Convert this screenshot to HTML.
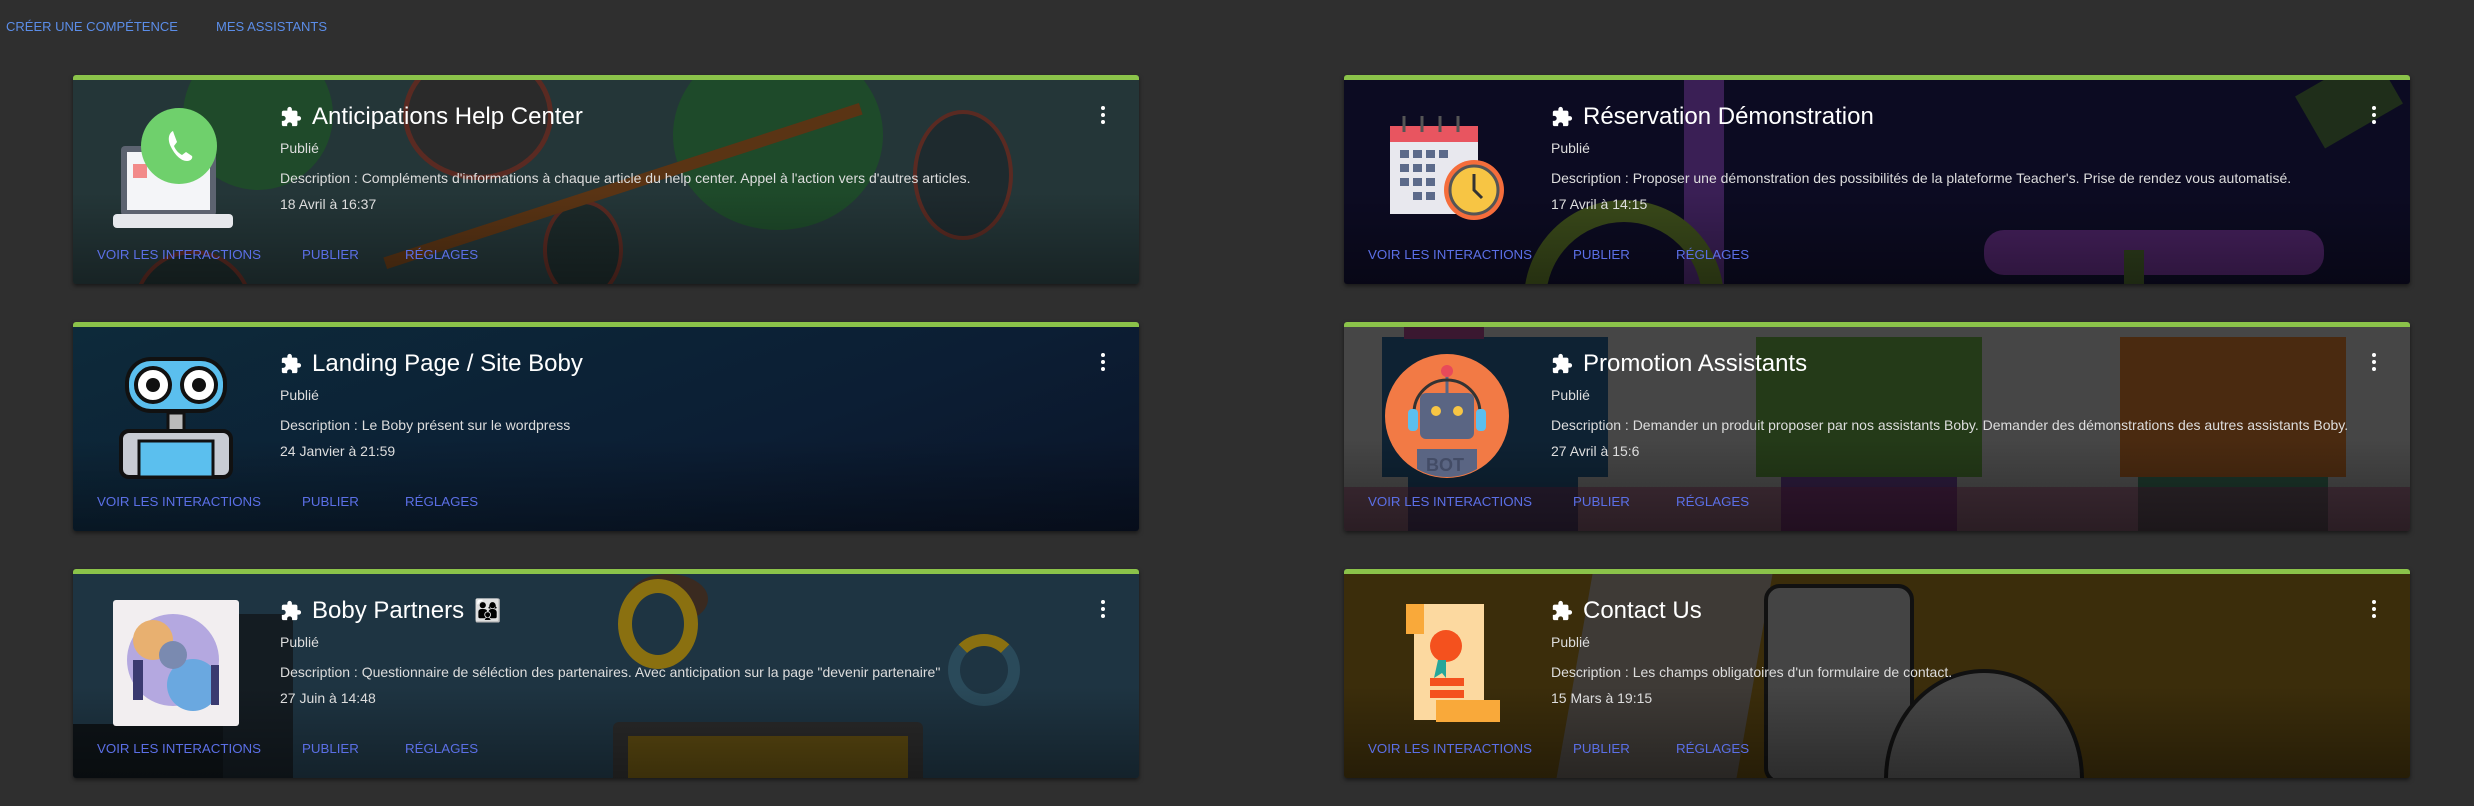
<!DOCTYPE html>
<html style="overflow:hidden"><head><meta charset="utf-8"><style>
*{margin:0;padding:0;box-sizing:border-box}
html,body{width:2474px;height:806px;overflow:hidden}
body{background:#2f2f2f;font-family:"Liberation Sans Narrow","Liberation Sans",sans-serif;position:relative}
.nav{position:absolute;top:19px;font-size:13px;color:#5b8de8;letter-spacing:0}
.card{position:absolute;width:1066px;height:209px;border-top:5px solid #8bc34a;border-radius:3px;overflow:hidden;box-shadow:0 2px 4px rgba(0,0,0,.5)}
.bg{position:absolute;inset:0}
.shade{position:absolute;inset:0;background:linear-gradient(180deg,rgba(0,0,0,0) 55%,rgba(0,0,0,.35) 100%)}
.ico{position:absolute;left:40px;top:26px;width:126px;height:126px}
.title{position:absolute;left:207px;top:23px;font-size:24px;color:#fff;display:flex;align-items:center;gap:10px;white-space:nowrap}
.title svg{width:22px;height:22px}
.t{position:absolute;left:207px;font-size:14px;color:#ddd;white-space:nowrap}
.acts{position:absolute;top:167px;left:24px;font-size:13.3px;color:#5b6fe6}
.acts span{position:absolute;white-space:nowrap}
.kb{position:absolute;right:34px;top:26px;width:4px}
.kb i{display:block;width:4px;height:4px;border-radius:50%;background:#fff;margin-bottom:3px}
</style></head><body>
<div class="nav" style="left:6px">CRÉER UNE COMPÉTENCE</div>
<div class="nav" style="left:216px">MES ASSISTANTS</div>

<!-- Card 1 -->
<div class="card" style="left:73px;top:75px">
<div class="bg" style="background:#243638">
<div style="position:absolute;left:110px;top:-40px;width:150px;height:150px;border-radius:50%;background:#1f4a2a"></div>
<div style="position:absolute;left:330px;top:-30px;width:150px;height:130px;border-radius:50%;background:#2a2a2a;border:5px solid #5a2a22"></div>
<div style="position:absolute;left:600px;top:-40px;width:210px;height:190px;border-radius:50%;background:#1e4a2a"></div>
<div style="position:absolute;left:840px;top:30px;width:100px;height:130px;border-radius:50%;background:#1e2a2e;border:4px solid #5a2a22"></div>
<div style="position:absolute;left:60px;top:170px;width:120px;height:120px;border-radius:50%;background:#1c2a2a;border:4px solid #5a2a22"></div>
<div style="position:absolute;left:470px;top:120px;width:80px;height:100px;border-radius:50%;background:#1c2a2a;border:4px solid #5a2a22"></div>
<div style="position:absolute;left:300px;top:100px;width:500px;height:12px;background:#5a3414;transform:rotate(-18deg)"></div>
</div><div class="shade"></div>
<svg class="ico" viewBox="0 0 126 126"><rect x="8" y="40" width="95" height="70" rx="4" fill="#5c6370"/><rect x="14" y="46" width="83" height="58" fill="#f4f5f8"/><rect x="20" y="58" width="14" height="14" fill="#f28a8a"/><rect x="0" y="108" width="120" height="14" rx="4" fill="#e6e8ec"/><circle cx="66" cy="40" r="38" fill="#6fd06c"/><path d="M60 25c-4 2-6 8-2 16s10 14 16 14c4 0 6-3 5-5l-6-4-4 3c-4-2-7-6-8-9l3-4-3-8z" fill="#fff"/></svg>
<div class="title"><svg viewBox="0 0 24 24"><path fill="#fff" d="M20.5 11H19V7a2 2 0 0 0-2-2h-4V3.5a2.5 2.5 0 0 0-5 0V5H4a2 2 0 0 0-2 2v3.8h1.5a2.7 2.7 0 0 1 0 5.4H2V20a2 2 0 0 0 2 2h3.8v-1.5a2.7 2.7 0 0 1 5.4 0V22H17a2 2 0 0 0 2-2v-4h1.5a2.5 2.5 0 0 0 0-5z"/></svg>Anticipations Help Center</div>
<div class="t" style="top:60px">Publié</div>
<div class="t" style="top:90px">Description : Compléments d'informations à chaque article du help center. Appel à l'action vers d'autres articles.</div>
<div class="t" style="top:116px">18 Avril à 16:37</div>
<div class="acts"><span style="left:0">VOIR LES INTERACTIONS</span><span style="left:205px">PUBLIER</span><span style="left:308px">RÉGLAGES</span></div>
<div class="kb"><i></i><i></i><i></i></div>
</div>

<!-- Card 2 -->
<div class="card" style="left:1344px;top:75px">
<div class="bg" style="background:#0c0b22">
<div style="position:absolute;left:340px;top:0;width:40px;height:209px;background:#3a1f55"></div>
<div style="position:absolute;left:640px;top:150px;width:340px;height:45px;border-radius:20px;background:#45205c"></div>
<div style="position:absolute;left:180px;width:200px;height:200px;border-radius:50%;border:22px solid #3a4a1a;top:120px"></div>
<div style="position:absolute;left:780px;top:170px;width:20px;height:60px;background:#2e3e1c"></div>
<div style="position:absolute;left:960px;top:-10px;width:90px;height:60px;background:#1f2e1a;transform:rotate(-30deg)"></div>
</div><div class="shade"></div>
<svg class="ico" viewBox="0 0 126 126"><rect x="6" y="20" width="88" height="88" fill="#e8e8ee"/><rect x="6" y="20" width="88" height="16" fill="#e85560"/><g fill="#5c6a8a"><rect x="16" y="44" width="9" height="8"/><rect x="29" y="44" width="9" height="8"/><rect x="42" y="44" width="9" height="8"/><rect x="55" y="44" width="9" height="8"/><rect x="16" y="58" width="9" height="8"/><rect x="29" y="58" width="9" height="8"/><rect x="42" y="58" width="9" height="8"/><rect x="16" y="72" width="9" height="8"/><rect x="29" y="72" width="9" height="8"/><rect x="42" y="72" width="9" height="8"/><rect x="29" y="86" width="9" height="8"/><rect x="42" y="86" width="9" height="8"/></g><g stroke="#555" stroke-width="3"><line x1="20" y1="10" x2="20" y2="26"/><line x1="38" y1="10" x2="38" y2="26"/><line x1="56" y1="10" x2="56" y2="26"/><line x1="74" y1="10" x2="74" y2="26"/></g><circle cx="90" cy="84" r="30" fill="#f56d3b"/><circle cx="90" cy="84" r="24" fill="#f7c544" stroke="#555" stroke-width="3"/><path d="M90 68v16l8 8" stroke="#333" stroke-width="3" fill="none"/></svg>
<div class="title"><svg viewBox="0 0 24 24"><path fill="#fff" d="M20.5 11H19V7a2 2 0 0 0-2-2h-4V3.5a2.5 2.5 0 0 0-5 0V5H4a2 2 0 0 0-2 2v3.8h1.5a2.7 2.7 0 0 1 0 5.4H2V20a2 2 0 0 0 2 2h3.8v-1.5a2.7 2.7 0 0 1 5.4 0V22H17a2 2 0 0 0 2-2v-4h1.5a2.5 2.5 0 0 0 0-5z"/></svg>Réservation Démonstration</div>
<div class="t" style="top:60px">Publié</div>
<div class="t" style="top:90px">Description : Proposer une démonstration des possibilités de la plateforme Teacher's. Prise de rendez vous automatisé.</div>
<div class="t" style="top:116px">17 Avril à 14:15</div>
<div class="acts"><span style="left:0">VOIR LES INTERACTIONS</span><span style="left:205px">PUBLIER</span><span style="left:308px">RÉGLAGES</span></div>
<div class="kb"><i></i><i></i><i></i></div>
</div>

<!-- Card 3 -->
<div class="card" style="left:73px;top:322px">
<div class="bg" style="background:linear-gradient(160deg,#0d2a3a 0%,#0c1e34 60%,#0a1428 100%)"></div><div class="shade"></div>
<svg class="ico" viewBox="0 0 126 126"><rect x="12" y="4" width="102" height="56" rx="26" fill="#111"/><rect x="16" y="8" width="94" height="48" rx="22" fill="#5bbfee"/><circle cx="40" cy="32" r="17" fill="#fff" stroke="#111" stroke-width="4"/><circle cx="40" cy="32" r="7" fill="#111"/><circle cx="86" cy="32" r="17" fill="#fff" stroke="#111" stroke-width="4"/><circle cx="86" cy="32" r="7" fill="#111"/><rect x="55" y="60" width="16" height="18" fill="#bbb" stroke="#111" stroke-width="3"/><rect x="8" y="78" width="110" height="46" rx="8" fill="#c8ccd4" stroke="#111" stroke-width="4"/><rect x="26" y="88" width="74" height="36" fill="#5bbfee" stroke="#111" stroke-width="3"/></svg>
<div class="title"><svg viewBox="0 0 24 24"><path fill="#fff" d="M20.5 11H19V7a2 2 0 0 0-2-2h-4V3.5a2.5 2.5 0 0 0-5 0V5H4a2 2 0 0 0-2 2v3.8h1.5a2.7 2.7 0 0 1 0 5.4H2V20a2 2 0 0 0 2 2h3.8v-1.5a2.7 2.7 0 0 1 5.4 0V22H17a2 2 0 0 0 2-2v-4h1.5a2.5 2.5 0 0 0 0-5z"/></svg>Landing Page / Site Boby</div>
<div class="t" style="top:60px">Publié</div>
<div class="t" style="top:90px">Description : Le Boby présent sur le wordpress</div>
<div class="t" style="top:116px">24 Janvier à 21:59</div>
<div class="acts"><span style="left:0">VOIR LES INTERACTIONS</span><span style="left:205px">PUBLIER</span><span style="left:308px">RÉGLAGES</span></div>
<div class="kb"><i></i><i></i><i></i></div>
</div>

<!-- Card 4 -->
<div class="card" style="left:1344px;top:322px">
<div class="bg" style="background:#464646">
<div style="position:absolute;left:38px;top:10px;width:226px;height:140px;background:#0e2233"></div>
<div style="position:absolute;left:64px;top:150px;width:170px;height:60px;background:#0e2233"></div>
<div style="position:absolute;left:60px;top:0;width:80px;height:12px;background:#3a1830"></div>
<div style="position:absolute;left:412px;top:10px;width:226px;height:140px;background:#243a18"></div>
<div style="position:absolute;left:437px;top:150px;width:176px;height:60px;background:#2a1a3a"></div>
<div style="position:absolute;left:776px;top:10px;width:226px;height:140px;background:#4a2a10"></div>
<div style="position:absolute;left:794px;top:150px;width:190px;height:60px;background:#1a3328"></div>
<div style="position:absolute;left:0;top:160px;width:1066px;height:50px;background:rgba(60,20,40,.5)"></div>
</div><div class="shade"></div>
<svg class="ico" viewBox="0 0 126 126"><circle cx="63" cy="63" r="62" fill="#f27a45"/><path d="M63 124a62 62 0 0 1-30-8V96h60v20a62 62 0 0 1-30 8z" fill="#5a6583"/><rect x="36" y="40" width="54" height="46" rx="6" fill="#5a6583"/><circle cx="52" cy="58" r="5" fill="#f7c544"/><circle cx="74" cy="58" r="5" fill="#f7c544"/><line x1="63" y1="40" x2="63" y2="22" stroke="#5a6583" stroke-width="3"/><circle cx="63" cy="18" r="6" fill="#e84a5a"/><path d="M30 60a33 33 0 0 1 66 0" stroke="#333" stroke-width="3" fill="none"/><rect x="24" y="56" width="10" height="22" rx="4" fill="#5bbfee"/><rect x="92" y="56" width="10" height="22" rx="4" fill="#5bbfee"/><text x="42" y="118" font-family="Liberation Sans" font-weight="bold" font-size="18" fill="#434c66">BOT</text></svg>
<div class="title"><svg viewBox="0 0 24 24"><path fill="#fff" d="M20.5 11H19V7a2 2 0 0 0-2-2h-4V3.5a2.5 2.5 0 0 0-5 0V5H4a2 2 0 0 0-2 2v3.8h1.5a2.7 2.7 0 0 1 0 5.4H2V20a2 2 0 0 0 2 2h3.8v-1.5a2.7 2.7 0 0 1 5.4 0V22H17a2 2 0 0 0 2-2v-4h1.5a2.5 2.5 0 0 0 0-5z"/></svg>Promotion Assistants</div>
<div class="t" style="top:60px">Publié</div>
<div class="t" style="top:90px">Description : Demander un produit proposer par nos assistants Boby. Demander des démonstrations des autres assistants Boby.</div>
<div class="t" style="top:116px">27 Avril à 15:6</div>
<div class="acts"><span style="left:0">VOIR LES INTERACTIONS</span><span style="left:205px">PUBLIER</span><span style="left:308px">RÉGLAGES</span></div>
<div class="kb"><i></i><i></i><i></i></div>
</div>

<!-- Card 5 -->
<div class="card" style="left:73px;top:569px">
<div class="bg" style="background:#1e3442">
<div style="position:absolute;left:555px;top:0;width:80px;height:50px;border-radius:50%;background:#3a2a20"></div>
<div style="position:absolute;left:545px;top:5px;width:80px;height:90px;border-radius:50%;border:14px solid #8a7010;background:#1e3442"></div>
<div style="position:absolute;left:875px;top:60px;width:72px;height:72px;border-radius:50%;border:12px solid #2a4a5a;border-top-color:#8a7010"></div>
<div style="position:absolute;left:150px;top:40px;width:70px;height:170px;background:#141c22"></div>
<div style="position:absolute;left:540px;top:148px;width:310px;height:70px;background:#2a2a2a;border-radius:6px"></div>
<div style="position:absolute;left:555px;top:162px;width:280px;height:50px;background:#5a4810"></div>
<div style="position:absolute;left:0;top:150px;width:150px;height:60px;background:#0e1418"></div>
</div><div class="shade"></div>
<svg class="ico" viewBox="0 0 126 126"><rect x="0" y="0" width="126" height="126" rx="3" fill="#f2eef0"/><circle cx="60" cy="60" r="46" fill="#b4a8e0"/><circle cx="40" cy="40" r="20" fill="#e8b070"/><circle cx="80" cy="85" r="26" fill="#6aa8e0"/><circle cx="60" cy="55" r="14" fill="#7a8ab0"/><rect x="20" y="60" width="10" height="40" fill="#3a3a70"/><rect x="98" y="65" width="8" height="40" fill="#3a3a70"/></svg>
<div class="title"><svg viewBox="0 0 24 24"><path fill="#fff" d="M20.5 11H19V7a2 2 0 0 0-2-2h-4V3.5a2.5 2.5 0 0 0-5 0V5H4a2 2 0 0 0-2 2v3.8h1.5a2.7 2.7 0 0 1 0 5.4H2V20a2 2 0 0 0 2 2h3.8v-1.5a2.7 2.7 0 0 1 5.4 0V22H17a2 2 0 0 0 2-2v-4h1.5a2.5 2.5 0 0 0 0-5z"/></svg>Boby Partners <span style="font-size:22px;line-height:24px">👨‍👩‍👦</span></div>
<div class="t" style="top:60px">Publié</div>
<div class="t" style="top:90px">Description : Questionnaire de séléction des partenaires. Avec anticipation sur la page "devenir partenaire"</div>
<div class="t" style="top:116px">27 Juin à 14:48</div>
<div class="acts"><span style="left:0">VOIR LES INTERACTIONS</span><span style="left:205px">PUBLIER</span><span style="left:308px">RÉGLAGES</span></div>
<div class="kb"><i></i><i></i><i></i></div>
</div>

<!-- Card 6 -->
<div class="card" style="left:1344px;top:569px">
<div class="bg" style="background:#3b2d0b">
<div style="position:absolute;left:230px;top:-10px;width:180px;height:230px;background:#3e3a36;transform:skewX(-10deg)"></div>
<div style="position:absolute;left:420px;top:10px;width:150px;height:200px;border-radius:16px;background:#444;border:4px solid #111"></div>
<div style="position:absolute;left:540px;top:95px;width:200px;height:220px;border-radius:50%;background:#464646;border:4px solid #111"></div>
</div><div class="shade"></div>
<svg class="ico" viewBox="0 0 126 126"><rect x="30" y="4" width="70" height="116" fill="#fcd9a0"/><path d="M22 4h18v30H22z" fill="#f9a93a"/><rect x="52" y="100" width="64" height="22" fill="#f9a93a"/><circle cx="62" cy="46" r="16" fill="#f4511e"/><path d="M54 60l-4 18 8-5 4 5v-18z" fill="#26a69a"/><rect x="46" y="78" width="34" height="8" fill="#f4511e"/><rect x="46" y="90" width="34" height="8" fill="#f4511e"/></svg>
<div class="title"><svg viewBox="0 0 24 24"><path fill="#fff" d="M20.5 11H19V7a2 2 0 0 0-2-2h-4V3.5a2.5 2.5 0 0 0-5 0V5H4a2 2 0 0 0-2 2v3.8h1.5a2.7 2.7 0 0 1 0 5.4H2V20a2 2 0 0 0 2 2h3.8v-1.5a2.7 2.7 0 0 1 5.4 0V22H17a2 2 0 0 0 2-2v-4h1.5a2.5 2.5 0 0 0 0-5z"/></svg>Contact Us</div>
<div class="t" style="top:60px">Publié</div>
<div class="t" style="top:90px">Description : Les champs obligatoires d'un formulaire de contact.</div>
<div class="t" style="top:116px">15 Mars à 19:15</div>
<div class="acts"><span style="left:0">VOIR LES INTERACTIONS</span><span style="left:205px">PUBLIER</span><span style="left:308px">RÉGLAGES</span></div>
<div class="kb"><i></i><i></i><i></i></div>
</div>
</body></html>
